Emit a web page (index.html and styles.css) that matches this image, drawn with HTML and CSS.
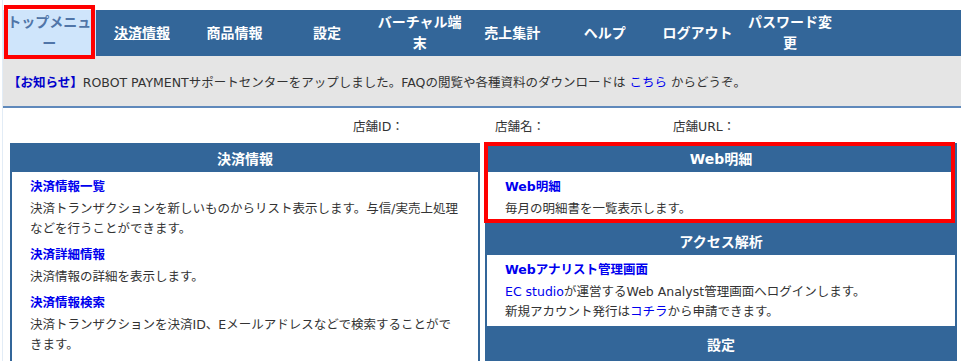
FILE: index.html
```html
<!DOCTYPE html>
<html lang="ja">
<head>
    <meta charset="UTF-8">
    <title>トップメニュー</title>
    <link rel="stylesheet" href="styles.css">
</head>
<body>
    <div class="page">
        <ul class="gnav">
            <li class="gnav-item is-active"><a href="#">トップメニュー</a></li>
            <li class="gnav-item"><a href="#" class="is-hover">決済情報</a></li>
            <li class="gnav-item"><a href="#">商品情報</a></li>
            <li class="gnav-item"><a href="#">設定</a></li>
            <li class="gnav-item"><a href="#">バーチャル端末</a></li>
            <li class="gnav-item"><a href="#">売上集計</a></li>
            <li class="gnav-item"><a href="#">ヘルプ</a></li>
            <li class="gnav-item"><a href="#">ログアウト</a></li>
            <li class="gnav-item"><a href="#">パスワード変更</a></li>
        </ul>

        <div class="notice">
            <p><span class="notice-label">【お知らせ】</span>ROBOT PAYMENTサポートセンターをアップしました。FAQの閲覧や各種資料のダウンロードは <a href="#">こちら</a> からどうぞ。</p>
        </div>

        <div class="shop-info">
            <span class="shop-id">店舗ID：</span>
            <span class="shop-name">店舗名：</span>
            <span class="shop-url">店舗URL：</span>
        </div>

        <div class="columns">
            <div class="panel panel-left">
                <div class="panel-head">決済情報</div>
                <div class="panel-body">
                    <div class="menu-item">
                        <p class="menu-title"><a href="#">決済情報一覧</a></p>
                        <p class="menu-desc">決済トランザクションを新しいものからリスト表示します。与信/実売上処理などを行うことができます。</p>
                    </div>
                    <div class="menu-item">
                        <p class="menu-title"><a href="#">決済詳細情報</a></p>
                        <p class="menu-desc">決済情報の詳細を表示します。</p>
                    </div>
                    <div class="menu-item">
                        <p class="menu-title"><a href="#">決済情報検索</a></p>
                        <p class="menu-desc">決済トランザクションを決済ID、Eメールアドレスなどで検索することがで<br>きます。</p>
                    </div>
                </div>
            </div>

            <div class="panel panel-right">
                <div class="section is-marked">
                    <div class="panel-head">Web明細</div>
                    <div class="panel-body">
                        <p class="menu-title"><a href="#">Web明細</a></p>
                        <p class="menu-desc">毎月の明細書を一覧表示します。</p>
                    </div>
                </div>
                <div class="section">
                    <div class="panel-head">アクセス解析</div>
                    <div class="panel-body">
                        <p class="menu-title"><a href="#">Webアナリスト管理画面</a></p>
                        <p class="menu-desc"><a href="#">EC studio</a>が運営するWeb Analyst管理画面へログインします。<br>新規アカウント発行は<a href="#">コチラ</a>から申請できます。</p>
                    </div>
                </div>
                <div class="section">
                    <div class="panel-head">設定</div>
                </div>
            </div>
        </div>
    </div>
</body>
</html>
```

FILE: styles.css
```css
* {
    margin: 0;
    padding: 0;
    box-sizing: border-box;
}

body {
    font-family: "DejaVu Sans", "Noto Sans CJK JP", sans-serif;
    font-size: 12.5px;
    color: #333;
    background-color: #fff;
    overflow: hidden;
}

a {
    color: #0000ee;
    text-decoration: none;
}

.page {
    margin-left: 2px;
    border-left: 1px solid #e2ecf6;
    padding-top: 10px;
    height: 100vh;
    display: flex;
    flex-direction: column;
}

/* global navigation */
.gnav {
    display: flex;
    list-style: none;
    flex: none;
    height: 46px;
    background-color: #336699;
}

.gnav-item {
    flex: none;
    width: 92.6px;
    padding: 0 3px;
    display: flex;
    align-items: center;
    justify-content: center;
    text-align: center;
    font-size: 14px;
    font-weight: bold;
    line-height: 21px;
}

.gnav-item a {
    color: #fff;
}

.gnav-item a.is-hover {
    text-decoration: underline;
}

.gnav-item.is-active {
    position: relative;
    background-color: #cfe5fb;
}

.gnav-item.is-active a {
    color: #5075a8;
}

.gnav-item.is-active::after {
    content: "";
    position: absolute;
    left: 1px;
    right: 1px;
    top: -5px;
    bottom: -3px;
    border: 4px solid #ff0000;
}

/* notice */
.notice {
    flex: none;
    height: 52px;
    padding-left: 5px;
    display: flex;
    align-items: center;
    background-color: #e5e5e5;
    border-bottom: 2px solid #5f89bb;
}

.notice-label {
    color: #0000cc;
    font-weight: bold;
}

/* shop info */
.shop-info {
    flex: none;
    height: 35px;
    padding-left: 350px;
    display: flex;
    align-items: center;
}

.shop-id {
    width: 142px;
}

.shop-name {
    width: 178px;
}

/* panels */
.columns {
    flex: 1;
    display: flex;
    gap: 5px;
    padding-left: 7px;
}

.panel {
    background-color: #336699;
    padding: 0 2px;
}

.panel-left {
    width: 470px;
    display: flex;
    flex-direction: column;
}

.panel-left .panel-body {
    flex: 1;
    margin-bottom: 0;
}

.panel-right {
    width: 472px;
}

.panel-head {
    height: 29px;
    padding-top: 3px;
    line-height: 26px;
    text-align: center;
    color: #fff;
    font-size: 14px;
    font-weight: bold;
}

.panel-body {
    background-color: #fff;
    padding: 4px 12px 4px 18px;
    margin-bottom: 3px;
}

.section.is-marked {
    position: relative;
}

.section.is-marked::after {
    content: "";
    position: absolute;
    left: -3px;
    right: 0;
    top: -1px;
    bottom: 0;
    border: 4px solid #ff0000;
}

.menu-item {
    margin-bottom: 5px;
}

.menu-title {
    line-height: 21px;
    font-weight: bold;
}

.menu-desc {
    line-height: 20px;
    padding-top: 2px;
}
```
